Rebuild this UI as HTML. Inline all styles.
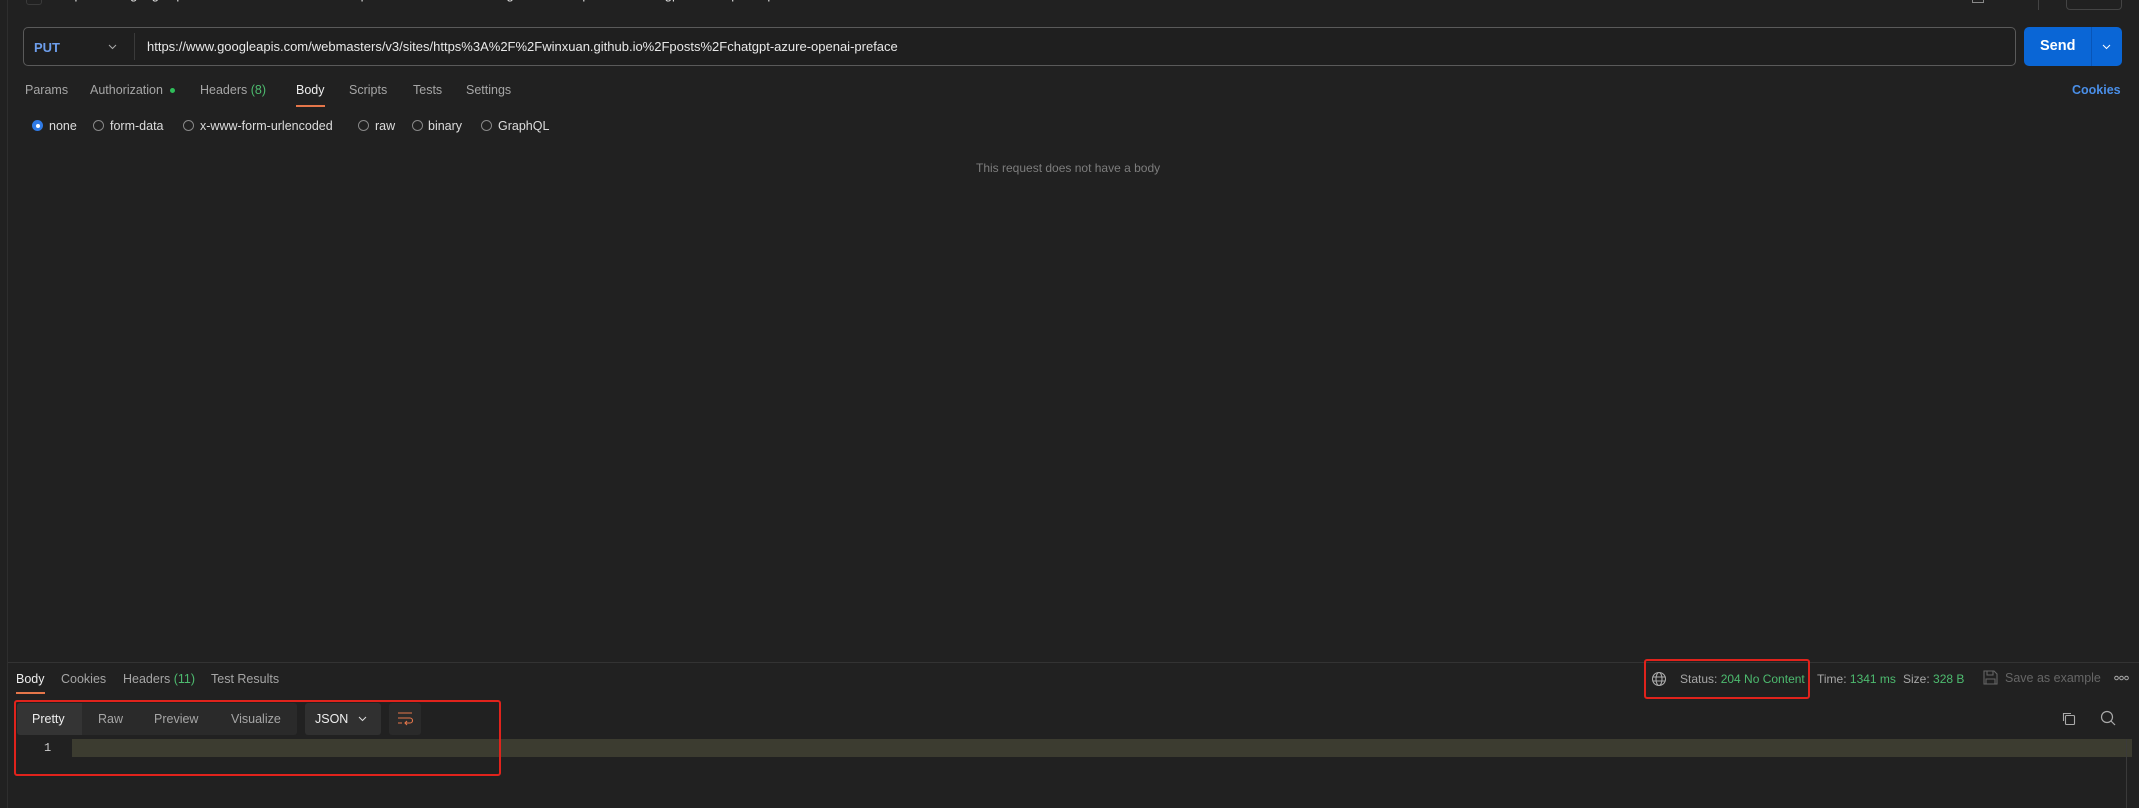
<!DOCTYPE html>
<html><head><meta charset="utf-8"><style>
*{margin:0;padding:0;box-sizing:border-box}
body{width:2139px;height:808px;background:#212121;font-family:"Liberation Sans",sans-serif;color:#c8c8c8;position:relative;overflow:hidden;font-size:12.5px}
.a{position:absolute;white-space:nowrap}
.g{color:#4dbb6f}
.m{color:#a6a6a6}
.r{position:absolute;top:120px;width:11px;height:11px;border-radius:50%;border:1px solid #888}
.rt{position:absolute;top:119px;color:#ddd;white-space:nowrap}
</style></head><body>
<div class="a" style="left:7px;top:0;width:1px;height:808px;background:#2e2e2e"></div>
<div class="a" style="left:26px;top:-10px;width:16px;height:15px;border:1px solid #3a3a3a;border-radius:3px"></div>
<div class="a" style="left:60px;top:-13px;color:#ddd;font-size:13px">https://www.googleapis.com/webmasters/v3/sites/https%3A%2F%2Fwinxuan.github.io%2Fposts%2Fchatgpt-azure-openai-preface</div>
<div class="a" style="left:1972px;top:-4px;width:12px;height:7px;border:1px solid #888"></div>
<div class="a" style="left:2038px;top:0;width:1px;height:10px;background:#444"></div>
<div class="a" style="left:2066px;top:-4px;width:56px;height:14px;border:1px solid #444;border-radius:4px"></div>

<div class="a" style="left:23px;top:27px;width:1993px;height:39px;border:1px solid #5a5a5a;border-radius:5px;background:#1f1f1f"></div>
<div class="a" style="left:34px;top:40px;color:#6d9eec;font-size:13px;font-weight:bold">PUT</div>
<svg class="a" style="left:108px;top:44px" width="9" height="6"><path d="M1 1l3.5 3.5 3.5-3.5" stroke="#aaa" fill="none"/></svg>
<div class="a" style="left:134px;top:33px;width:1px;height:27px;background:#3a3a3a"></div>
<div class="a" style="left:147px;top:39px;color:#e8e8e8;font-size:13px">https://www.googleapis.com/webmasters/v3/sites/https%3A%2F%2Fwinxuan.github.io%2Fposts%2Fchatgpt-azure-openai-preface</div>
<div class="a" style="left:2024px;top:27px;width:98px;height:39px;background:#0a66d6;border-radius:5px"></div>
<div class="a" style="left:2091px;top:27px;width:1px;height:39px;background:#0855b8"></div>
<div class="a" style="left:2040px;top:38px;color:#fff;font-weight:bold;font-size:14.5px">Send</div>
<svg class="a" style="left:2102px;top:44px" width="9" height="6"><path d="M1 1l3.5 3.5 3.5-3.5" stroke="#fff" fill="none"/></svg>

<div class="a m" style="left:25px;top:83px">Params</div>
<div class="a m" style="left:90px;top:83px">Authorization</div>
<div class="a" style="left:170px;top:88px;width:5px;height:5px;border-radius:50%;background:#2fbe5a"></div>
<div class="a m" style="left:200px;top:83px">Headers <span class="g">(8)</span></div>
<div class="a" style="left:296px;top:83px;color:#eee">Body</div>
<div class="a" style="left:296px;top:105px;width:29px;height:2px;background:#e5764a"></div>
<div class="a m" style="left:349px;top:83px">Scripts</div>
<div class="a m" style="left:413px;top:83px">Tests</div>
<div class="a m" style="left:466px;top:83px">Settings</div>
<div class="a" style="left:2072px;top:83px;color:#4a8fe8;font-weight:bold">Cookies</div>

<div class="a" style="left:32px;top:120px;width:11px;height:11px;border-radius:50%;background:#2f7ae5"><div style="margin:3.5px;width:4px;height:4px;border-radius:50%;background:#fff"></div></div>
<div class="rt" style="left:49px">none</div>
<div class="r" style="left:93px"></div><div class="rt" style="left:110px">form-data</div>
<div class="r" style="left:183px"></div><div class="rt" style="left:200px">x-www-form-urlencoded</div>
<div class="r" style="left:358px"></div><div class="rt" style="left:375px">raw</div>
<div class="r" style="left:412px"></div><div class="rt" style="left:428px">binary</div>
<div class="r" style="left:481px"></div><div class="rt" style="left:498px">GraphQL</div>
<div class="a" style="left:976px;top:161px;color:#7d7d7d;font-size:12px">This request does not have a body</div>

<div class="a" style="left:8px;top:662px;width:2131px;height:1px;background:#333"></div>
<div class="a" style="left:16px;top:672px;color:#eee">Body</div>
<div class="a" style="left:16px;top:692px;width:29px;height:2px;background:#e5764a"></div>
<div class="a m" style="left:61px;top:672px">Cookies</div>
<div class="a m" style="left:123px;top:672px">Headers <span class="g">(11)</span></div>
<div class="a m" style="left:211px;top:672px">Test Results</div>

<svg class="a" style="left:1651px;top:671px" width="16" height="16" fill="none" stroke="#aaa" stroke-width="1.1"><circle cx="8" cy="8" r="6.5"/><ellipse cx="8" cy="8" rx="3" ry="6.5"/><path d="M1.5 6h13M1.5 10h13"/></svg>
<div class="a m" style="left:1680px;top:672px;font-size:12px">Status: <span class="g">204 No Content</span></div>
<div class="a m" style="left:1817px;top:672px;font-size:12px">Time: <span class="g">1341 ms</span></div>
<div class="a m" style="left:1903px;top:672px;font-size:12px">Size: <span class="g">328 B</span></div>
<svg class="a" style="left:1983px;top:670px" width="15" height="15" fill="none" stroke="#666" stroke-width="1.1"><path d="M1 1h10l3 3v10H1z M4 1v4h6V1 M3 14V9h9v5"/></svg>
<div class="a" style="left:2005px;top:671px;color:#666;font-size:12.5px">Save as example</div>
<svg class="a" style="left:2114px;top:675px" width="15" height="6" fill="none" stroke="#aaa" stroke-width="1"><circle cx="2.5" cy="3" r="1.8"/><circle cx="7.5" cy="3" r="1.8"/><circle cx="12.5" cy="3" r="1.8"/></svg>
<div class="a" style="left:1644px;top:659px;width:166px;height:40px;border:2px solid #e0231c;border-radius:3px"></div>

<div class="a" style="left:17px;top:703px;width:280px;height:32px;background:#2a2a2a;border-radius:3px"></div>
<div class="a" style="left:17px;top:703px;width:65px;height:32px;background:#343434;border-radius:3px 0 0 3px"></div>
<div class="a" style="left:32px;top:712px;color:#eee">Pretty</div>
<div class="a m" style="left:98px;top:712px">Raw</div>
<div class="a m" style="left:154px;top:712px">Preview</div>
<div class="a m" style="left:231px;top:712px">Visualize</div>
<div class="a" style="left:305px;top:703px;width:76px;height:32px;background:#303030;border-radius:3px"></div>
<div class="a" style="left:315px;top:712px;color:#eee">JSON</div>
<svg class="a" style="left:358px;top:716px" width="9" height="6"><path d="M1 1l3.5 3.5 3.5-3.5" stroke="#ddd" fill="none"/></svg>
<div class="a" style="left:389px;top:703px;width:32px;height:32px;background:#2a2a2a;border-radius:3px"></div>
<svg class="a" style="left:397px;top:711px" width="16" height="16" fill="none" stroke="#e5764a" stroke-width="1.1"><path d="M1 2h14M1 7h12a2.5 2.5 0 0 1 0 5H8m2-2l-2 2 2 2M1 12h4"/></svg>
<div class="a" style="left:72px;top:739px;width:2060px;height:18px;background:#3c3c30"></div>
<div class="a" style="left:2126px;top:739px;width:1px;height:69px;background:#3a3a3a"></div>
<div class="a" style="left:44px;top:741px;color:#ccc;font-family:'Liberation Mono',monospace;font-size:12px">1</div>
<div class="a" style="left:14px;top:700px;width:487px;height:76px;border:2px solid #e0231c;border-radius:3px"></div>
<svg class="a" style="left:2061px;top:711px" width="15" height="15" fill="none" stroke="#aaa" stroke-width="1.1"><rect x="4.5" y="4.5" width="9" height="9" rx="1"/><path d="M2.5 10V2.5H10"/></svg>
<svg class="a" style="left:2100px;top:710px" width="16" height="16" fill="none" stroke="#aaa" stroke-width="1.2"><circle cx="7" cy="7" r="5.5"/><path d="M11 11l4 4"/></svg>
</body></html>
